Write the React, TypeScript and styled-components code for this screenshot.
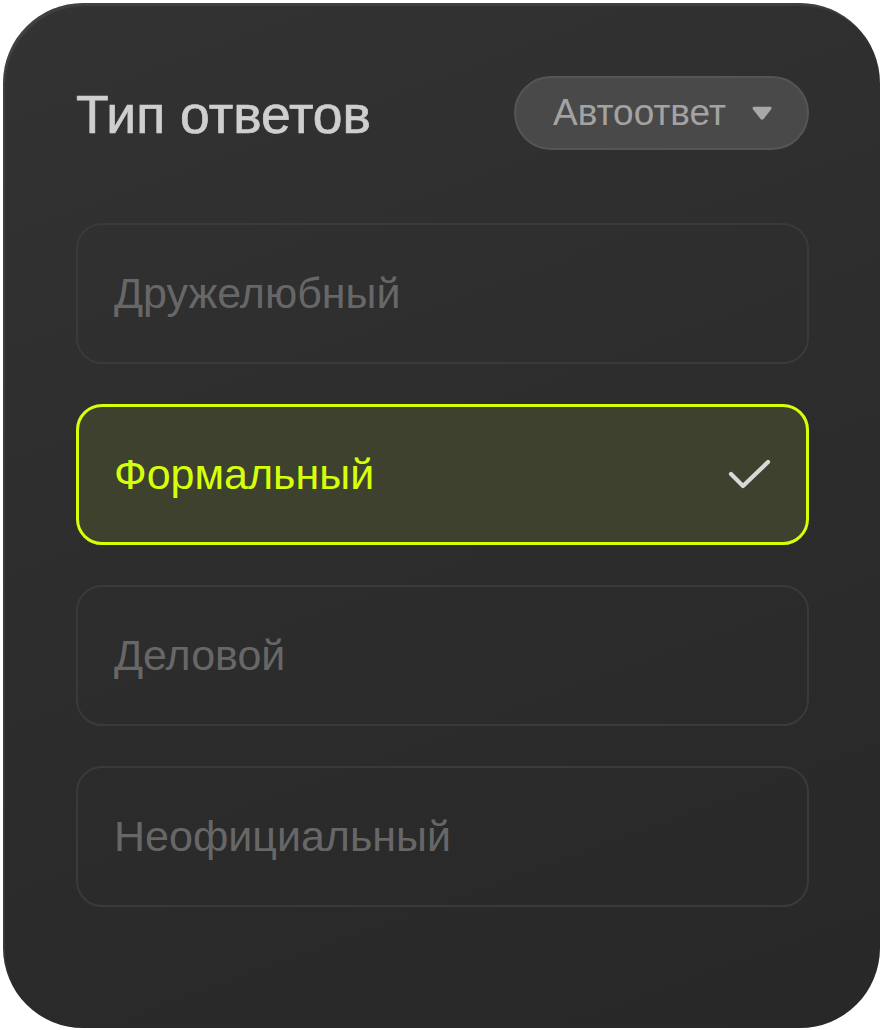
import React, { useState } from 'react'
import styled, { createGlobalStyle } from 'styled-components'

const GlobalStyle = createGlobalStyle`
  html, body {
    margin: 0;
    padding: 0;
    background: #fff;
  }
  body {
    font-family: "Liberation Sans", Arial, sans-serif;
  }
`

const StyledCard = styled.div`
  box-sizing: border-box;
  margin: 3px 2px 2px 3px;
  width: 877px;
  height: 1025px;
  padding: 73px 71px 0 73px;
  border-radius: 80px;
  background: linear-gradient(160deg, #333333 0%, #2d2d2d 45%, #282828 100%);
  box-shadow: inset 2px 3px 1px rgba(255, 255, 255, 0.07);
  display: flex;
  flex-direction: column;
`

const StyledHeader = styled.div`
  display: flex;
  align-items: center;
  justify-content: space-between;
  height: 74px;
  margin-bottom: 73px;
`

const StyledTitle = styled.h1`
  margin: 2px 0 0;
  font-size: 53.5px;
  font-weight: 400;
  color: #cfcfcf;
  -webkit-text-stroke: 0.7px #cfcfcf;
`

const StyledPill = styled.button`
  box-sizing: border-box;
  display: flex;
  align-items: center;
  gap: 25px;
  height: 74px;
  width: 295px;
  padding: 0 34px 0 37px;
  border-radius: 37px;
  border: 2px solid #555555;
  background: #494949;
  color: #a3a3a3;
  font-family: inherit;
  font-size: 37px;
  cursor: pointer;
`

const StyledList = styled.ul`
  list-style: none;
  margin: 0;
  padding: 0;
  display: flex;
  flex-direction: column;
  gap: 40px;
`

const StyledOption = styled.li<{ $active: boolean }>`
  box-sizing: border-box;
  height: 141px;
  display: flex;
  align-items: center;
  justify-content: space-between;
  padding: 0 34px 0 ${p => (p.$active ? '35px' : '36px')};
  border-radius: 26px;
  border: ${p => (p.$active ? '3px solid #d6ff0a' : '2px solid #3a3a3a')};
  background: ${p => (p.$active ? '#3d412d' : 'transparent')};
  color: ${p => (p.$active ? '#d6ff0a' : '#676767')};
  font-size: 43px;
  cursor: pointer;
`

const CaretIcon = () => (
  <svg width="23" height="17" viewBox="0 0 23 17">
    <path d="M3.5 1.5 H19.5 Q22.5 1.5 20.8 4.4 L13.3 14 Q11.5 16 9.7 14 L2.2 4.4 Q0.5 1.5 3.5 1.5 Z" fill="#a8a8a8" />
  </svg>
)

const CheckIcon = () => (
  <svg width="44" height="34" viewBox="0 0 44 34">
    <path d="M3 16 L15 28 L40 4" fill="none" stroke="#d9d9d9" strokeWidth="4.2" strokeLinecap="round" strokeLinejoin="round" />
  </svg>
)

const items = ['Дружелюбный', 'Формальный', 'Деловой', 'Неофициальный']

const App = () => {
  const [current, setCurrent] = useState(1)

  return (
    <>
      <GlobalStyle />
      <StyledCard>
        <StyledHeader>
          <StyledTitle>Тип ответов</StyledTitle>
          <StyledPill>
            Автоответ
            <CaretIcon />
          </StyledPill>
        </StyledHeader>
        <StyledList>
          {items.map((item, index) => (
            <StyledOption key={item} $active={current === index} onClick={() => setCurrent(index)}>
              <span>{item}</span>
              {current === index && <CheckIcon />}
            </StyledOption>
          ))}
        </StyledList>
      </StyledCard>
    </>
  )
}

export default App
